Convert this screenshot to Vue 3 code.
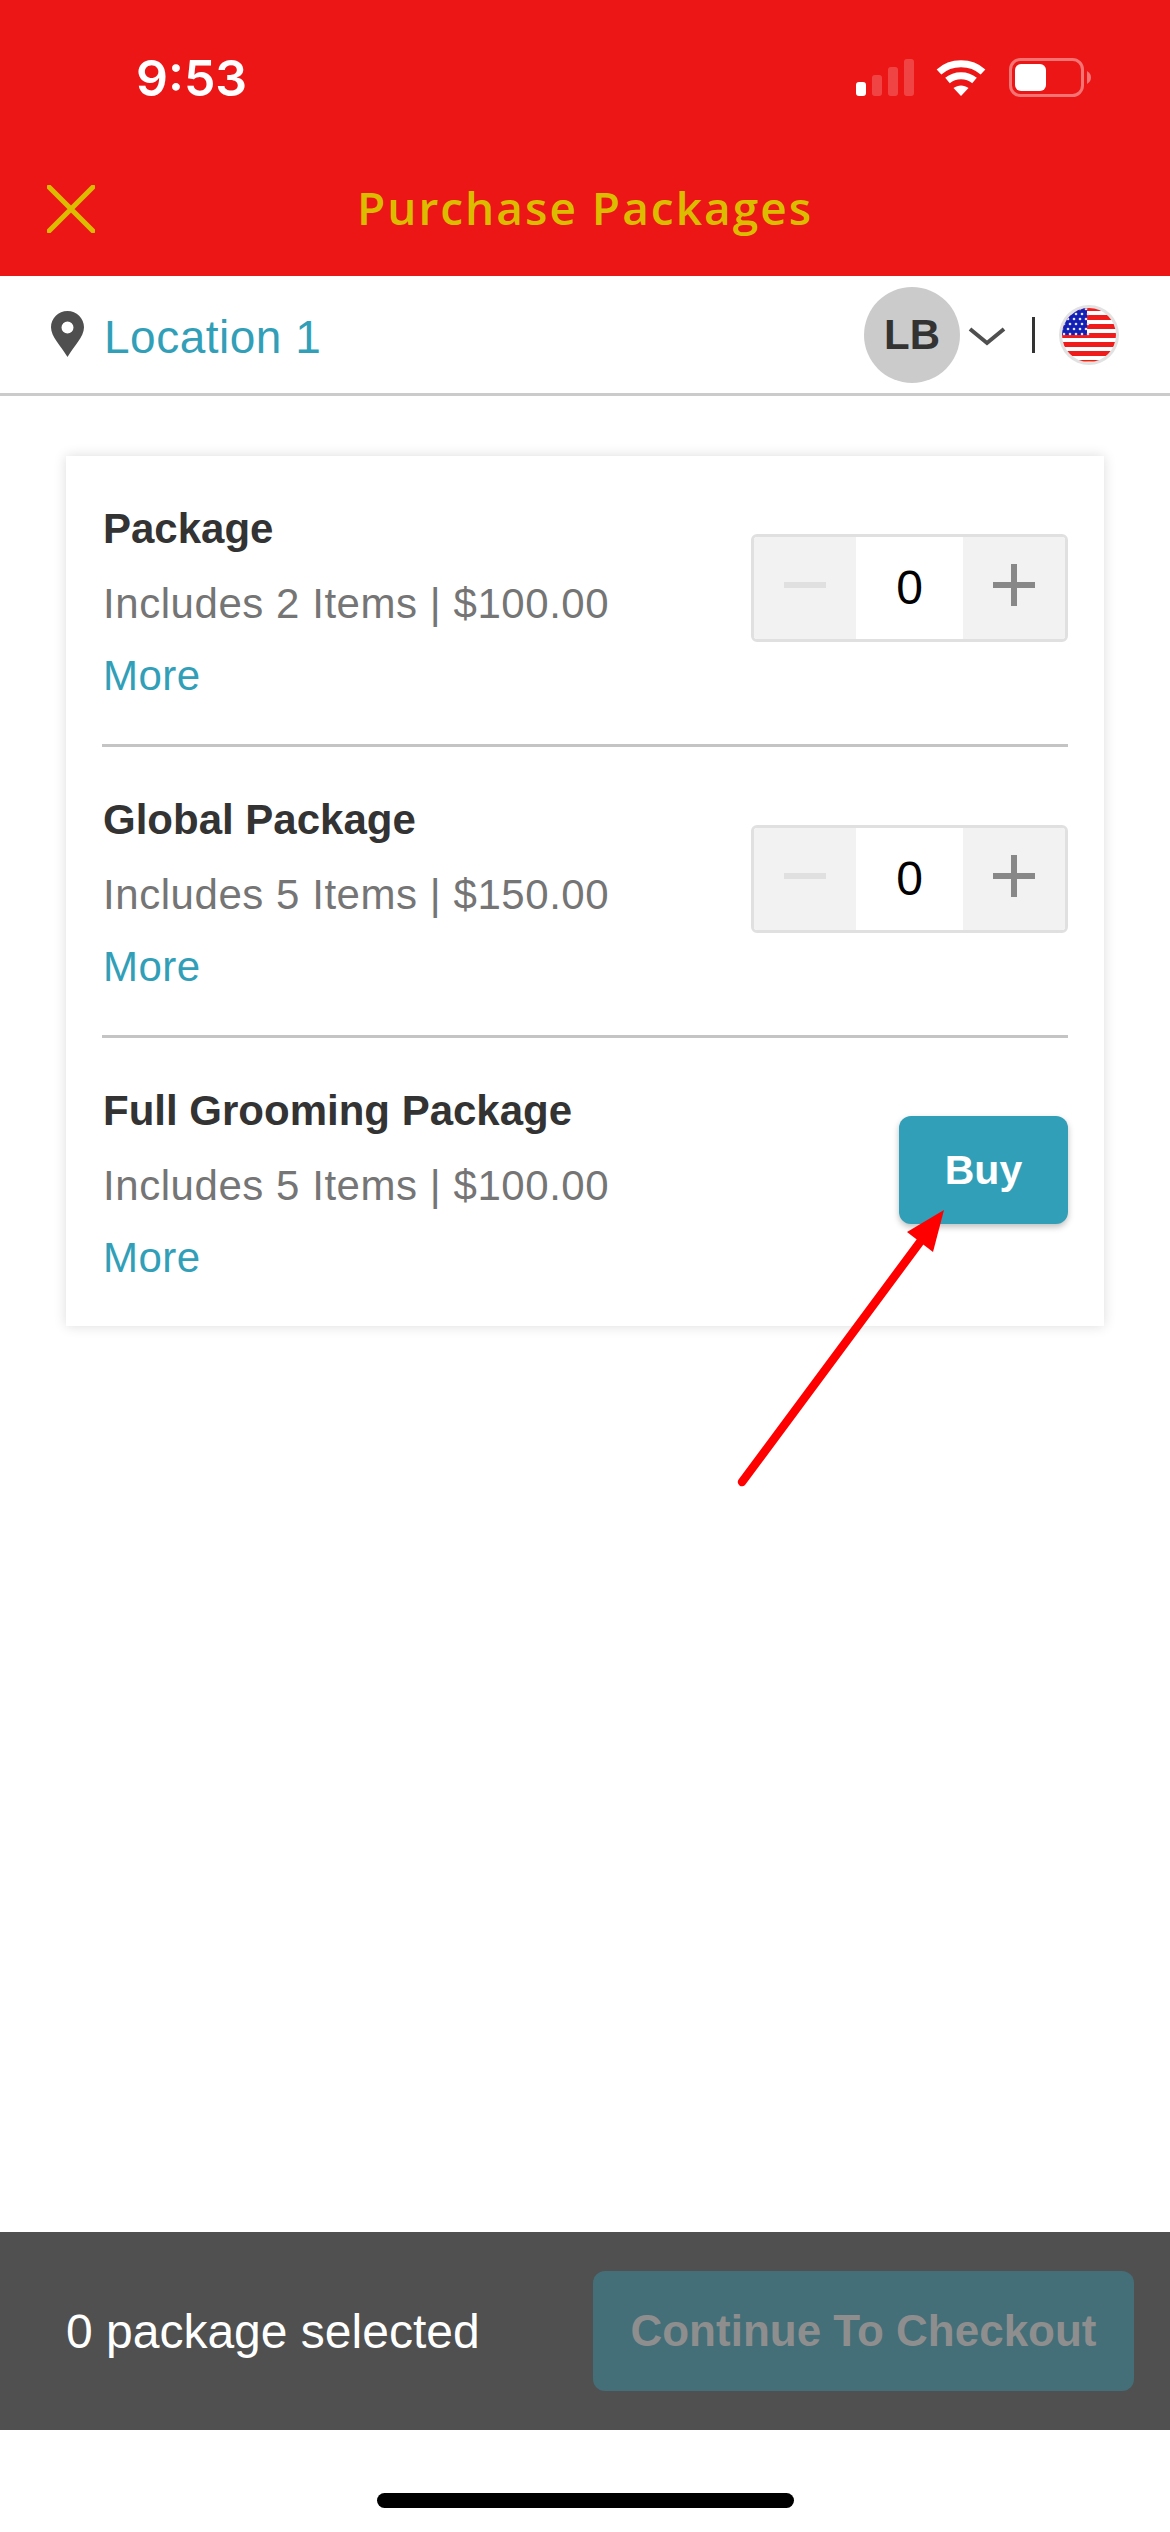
<script setup>
import { ref } from 'vue'

const paquetes = ref([
  { nombre: 'Package', info: 'Includes 2 Items | $100.00', tipo: 'stepper', cantidad: 0 },
  { nombre: 'Global Package', info: 'Includes 5 Items | $150.00', tipo: 'stepper', cantidad: 0 },
  { nombre: 'Full Grooming Package', info: 'Includes 5 Items | $100.00', tipo: 'buy', cantidad: 0 },
])

const barras = [
  { x: 0, y: 23, h: 14, o: 1 },
  { x: 16, y: 16, h: 21, o: 0.2 },
  { x: 32, y: 8, h: 29, o: 0.2 },
  { x: 48, y: 0, h: 37, o: 0.2 },
]

// franjas rojas de la bandera
const franjas = [0, 9, 18, 27, 36, 45, 54]
</script>

<template>
  <div class="page">
    <header class="top">
      <div class="status">
        <span class="time">9:53</span>
        <div class="status-icons">
          <svg class="signal" width="58" height="37" viewBox="0 0 58 37">
            <rect v-for="b in barras" :key="b.x" :x="b.x" :y="b.y" width="10" :height="b.h" rx="3" fill="#fff" :fill-opacity="b.o" />
          </svg>
          <svg class="wifi" width="50" height="38" viewBox="0 0 50 38">
            <path d="M3 13 C15 2 35 2 47 13" fill="none" stroke="#fff" stroke-width="7" />
            <path d="M11.500 21.500 C19 15 31 15 38.500 21.500" fill="none" stroke="#fff" stroke-width="7" />
            <path d="M17.500 29 C22 25.500 28 25.500 32.500 29 L25 37 Z" fill="#fff" />
          </svg>
          <svg class="battery" width="83" height="40" viewBox="0 0 83 40">
            <rect x="1.500" y="1.500" width="72" height="36" rx="10" fill="none" stroke="#fff" stroke-opacity="0.4" stroke-width="3" />
            <rect x="6" y="6" width="31" height="27" rx="6" fill="#fff" />
            <path d="M78 13 C81 15 82 17 82 19.500 C82 22 81 24 78 26 Z" fill="#fff" fill-opacity="0.4" />
          </svg>
        </div>
      </div>
      <div class="nav">
        <svg class="close" width="48" height="48" viewBox="0 0 48 48">
          <path d="M2 2 L46 46 M46 2 L2 46" stroke="#dcbc00" stroke-width="5" stroke-linecap="round" />
        </svg>
        <h1>Purchase Packages</h1>
      </div>
    </header>

    <div class="locbar">
      <svg class="pin" width="33" height="46" viewBox="0 0 33 46">
        <path fill-rule="evenodd" d="M16.500 0 C7.400 0 0 7.300 0 16.300 C0 26 10 35 16.500 46 C23 35 33 26 33 16.300 C33 7.300 25.600 0 16.500 0 Z M16.500 10.500 A6 6 0 1 1 16.500 22.500 A6 6 0 1 1 16.500 10.500 Z" fill="#4f4f4f" />
      </svg>
      <span class="loc">Location 1</span>
      <div class="avatar">LB</div>
      <svg class="chevron" width="38" height="20" viewBox="0 0 38 20">
        <path d="M2 3 L19 17 L36 3" fill="none" stroke="#4f4f4f" stroke-width="4" />
      </svg>
      <span class="sep"></span>
      <svg class="flag" width="60" height="60" viewBox="0 0 60 60">
        <defs>
          <clipPath id="redondo"><circle cx="30" cy="30" r="27" /></clipPath>
        </defs>
        <circle cx="30" cy="30" r="30" fill="#e2e2e2" />
        <g clip-path="url(#redondo)">
          <rect width="60" height="60" fill="#fff" />
          <rect v-for="f in franjas" :key="f" x="0" :y="f + 1" width="60" height="5" fill="#f01c1c" />
          <rect y="56" width="60" height="4" fill="#f2a070" />
          <rect width="28" height="30" fill="#1420b4" />
          <g fill="#dfe3ff">
            <circle v-for="n in 30" :key="n" :cx="3 + ((n - 1) % 5) * 6 + (Math.floor((n - 1) / 5) % 2) * 2" :cy="4 + Math.floor((n - 1) / 5) * 5" r="1.300" />
          </g>
        </g>
      </svg>
    </div>

    <main class="content">
      <section class="card">
        <article v-for="p in paquetes" :key="p.nombre" class="row">
          <div class="txt">
            <h2>{{ p.nombre }}</h2>
            <p class="info">{{ p.info }}</p>
            <a class="more">More</a>
          </div>
          <div v-if="p.tipo === 'stepper'" class="stepper">
            <button class="step">
              <svg width="42" height="6" viewBox="0 0 42 6"><rect width="42" height="6" fill="#e0e0e0" /></svg>
            </button>
            <span class="qty">{{ p.cantidad }}</span>
            <button class="step">
              <svg width="42" height="42" viewBox="0 0 42 42"><path d="M0 18 H18 V0 H24 V18 H42 V24 H24 V42 H18 V24 H0 Z" fill="#888" /></svg>
            </button>
          </div>
          <button v-else class="buy">Buy</button>
        </article>
      </section>
    </main>

    <footer class="bottom">
      <span class="selected">0 package selected</span>
      <button class="checkout">Continue To Checkout</button>
    </footer>
    <div class="home"><span></span></div>

    <!-- flecha de la anotación encima del botón -->
    <svg class="arrow" width="220" height="290" viewBox="0 0 220 290">
      <path d="M12 282 L190 42" stroke="#fe0000" stroke-width="8.500" stroke-linecap="round" />
      <path d="M214 10 L177 32 L203 52 Z" fill="#fe0000" />
    </svg>
  </div>
</template>

<style scoped>
.page {
  position: relative;
  width: 1170px;
  height: 2532px;
  display: flex;
  flex-direction: column;
  background: #fff;
  font-family: "Liberation Sans", Arial, sans-serif;
  overflow: hidden;
}

.top { background: #ed1616; height: 276px; flex: none; }

.status {
  height: 110px;
  display: flex;
  align-items: flex-start;
  justify-content: space-between;
}
.time {
  margin: 50px 0 0 136px;
  color: #fff;
  font-family: Inter, sans-serif;
  font-weight: 600;
  font-size: 50px;
  line-height: 56px;
}
.status-icons { display: flex; align-items: flex-start; margin: 58px 78px 0 0; }
.signal { margin: 1px 22px 0 0; }
.wifi { margin: 1px 23px 0 0; }

.nav {
  position: relative;
  height: 166px;
  display: flex;
  align-items: flex-start;
  justify-content: center;
}
.close { position: absolute; left: 47px; top: 75px; }
.nav h1 {
  margin: 67px 0 0 0;
  color: #dcbc00;
  font-family: "Open Sans", sans-serif;
  font-weight: 600;
  font-size: 46px;
  line-height: 60px;
  letter-spacing: 2px;
}

.locbar {
  height: 117px;
  flex: none;
  display: flex;
  align-items: center;
  border-bottom: 3px solid #cbcbcb;
  box-sizing: content-box;
  padding-left: 51px;
}
.pin { flex: none; margin-top: -1px; }
.loc {
  margin: 5px auto 0 20px;
  color: #329fb8;
  font-size: 46px;
  letter-spacing: 0.5px;
}
.avatar {
  width: 96px;
  height: 96px;
  border-radius: 50%;
  background: #cbcbcb;
  color: #333;
  font-weight: 700;
  font-size: 42px;
  display: flex;
  align-items: center;
  justify-content: center;
}
.chevron { margin: 2px 0 0 8px; }
.sep { width: 3px; height: 36px; background: #333; margin: 0 0 0 26px; }
.flag { margin-right: 51px; margin-left: 24px; }

.content { flex: 1; padding: 60px 66px 0; }

.card {
  background: #fff;
  box-shadow: 0 0 12px rgba(0, 0, 0, 0.14);
  padding: 0 36px;
  height: 870px;
  box-sizing: border-box;
}
.row {
  height: 291px;
  box-sizing: border-box;
  display: flex;
  justify-content: space-between;
  align-items: flex-start;
  border-bottom: 3px solid #c4c4c4;
}
.row:last-child { height: 288px; border-bottom: none; }

.txt { padding: 50px 0 0 1px; }
.txt h2 {
  margin: 0;
  font-size: 42px;
  line-height: 46px;
  color: #333;
}
.info {
  margin: 29px 0 0;
  font-size: 42px;
  line-height: 46px;
  color: #757575;
  letter-spacing: 0.55px;
}
.more {
  display: block;
  margin-top: 26px;
  font-size: 42px;
  line-height: 46px;
  letter-spacing: 0.5px;
  color: #329fb8;
}

.stepper {
  margin-top: 78px;
  width: 317px;
  height: 108px;
  box-sizing: border-box;
  border: 3px solid #e0e0e0;
  border-radius: 6px;
  display: flex;
  overflow: hidden;
}
.step {
  flex: none;
  width: 102px;
  border: none;
  padding: 0;
  background: #f2f2f2;
  display: flex;
  align-items: center;
  justify-content: center;
  margin-bottom: 6px;
  box-shadow: 0 6px 0 #f2f2f2;
}
.qty {
  flex: 1;
  text-align: center;
  color: #000;
  font-size: 48px;
  line-height: 102px;
}

.buy {
  margin-top: 78px;
  width: 169px;
  height: 108px;
  border: none;
  border-radius: 12px;
  background: #329fb8;
  color: #fff;
  font-family: inherit;
  font-weight: 700;
  font-size: 41px;
  box-shadow: 0 3px 6px rgba(0, 0, 0, 0.25);
}

.bottom {
  height: 198px;
  flex: none;
  background: #505050;
  display: flex;
  align-items: center;
  justify-content: space-between;
  padding: 0 36px 0 66px;
}
.selected { color: #fff; font-size: 48px; }
.checkout {
  width: 541px;
  height: 120px;
  border: none;
  border-radius: 12px;
  background: #446e78;
  color: #8e8e8e;
  font-family: inherit;
  font-weight: 700;
  font-size: 44px;
  white-space: nowrap;
}

.home {
  height: 102px;
  flex: none;
  display: flex;
  justify-content: center;
  padding-top: 63px;
  box-sizing: border-box;
}
.home span { width: 417px; height: 15px; border-radius: 8px; background: #000; }

.arrow { position: absolute; left: 730px; top: 1200px; }
</style>
